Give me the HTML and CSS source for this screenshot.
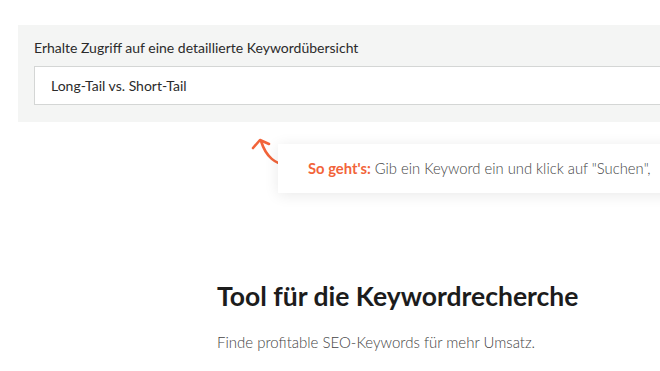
FILE: index.html
```html
<!DOCTYPE html>
<html>
<head>
  <title>Keywordrecherche</title>
  <link rel="stylesheet" href="styles.css">
</head>
<body>
  <div class="page">
    <div class="search-panel">
      <label for="keyword" class="search-label">Erhalte Zugriff auf eine detaillierte Keywordübersicht</label>
      <input type="text" id="keyword" class="search-input" value="Long-Tail vs. Short-Tail" />
    </div>

    <div class="hint-row">
      <svg class="hint-arrow" width="40" height="32" viewBox="0 0 40 32">
        <path d="M37 27 C 26 28, 16 20, 11 4" fill="none" stroke="#f2643a" stroke-width="2.6" stroke-linecap="round"/>
        <path d="M3 11 L 10 3 L 19 7" fill="none" stroke="#f2643a" stroke-width="2.6" stroke-linecap="round" stroke-linejoin="round"/>
      </svg>
      <div class="hint-card">
        <b>So geht's:</b> Gib ein Keyword ein und klick auf "Suchen",
      </div>
    </div>

    <div class="intro">
      <h1>Tool für die Keywordrecherche</h1>
      <p>Finde profitable SEO-Keywords für mehr Umsatz.</p>
    </div>
  </div>
</body>
</html>
```

FILE: styles.css
```css
body {
  font-family: Lato, "Open Sans", sans-serif;
  background-color: white;
  margin: 0;
  padding: 0;
}

.page {
  width: 660px;
  height: 371px;
  overflow: hidden;
  padding-top: 25px;
  box-sizing: border-box;
}

.search-panel {
  background-color: #f4f5f4;
  margin-left: 18px;
  width: 700px;
  padding: 14px 16px 17px 16px;
  box-sizing: border-box;
  display: flex;
  flex-direction: column;
}

.search-label {
  font-size: 14px;
  color: #2b2b2b;
  margin-bottom: 10px;
}

.search-input {
  height: 39px;
  border: 1px solid #d4d6d5;
  background: white;
  padding: 0 16px;
  font-family: Lato, "Open Sans", sans-serif;
  font-size: 14px;
  color: #2b2b2b;
  box-sizing: border-box;
  outline: none;
}

.hint-row {
  display: flex;
  margin-top: 13px;
  margin-left: 250px;
  width: 450px;
}

.hint-arrow {
  flex: none;
  margin-top: 2px;
  margin-right: -12px;
}

.hint-card {
  margin-top: 9px;
  background: white;
  box-shadow: 0 2px 14px rgba(0, 0, 0, 0.09);
  padding: 15px 0 16px 30px;
  font-size: 14.8px;
  font-weight: 300;
  color: #444;
  white-space: nowrap;
  overflow: hidden;
  flex: 1;
}

.hint-card b {
  color: #f2643a;
  font-weight: 700;
}

.intro {
  margin-left: 217px;
  margin-top: 87px;
}

.intro h1 {
  font-size: 26.5px;
  font-weight: 700;
  color: #1c1c1c;
  margin: 0;
}

.intro p {
  font-size: 15px;
  font-weight: 300;
  color: #444;
  margin: 21px 0 0 0;
}
```
